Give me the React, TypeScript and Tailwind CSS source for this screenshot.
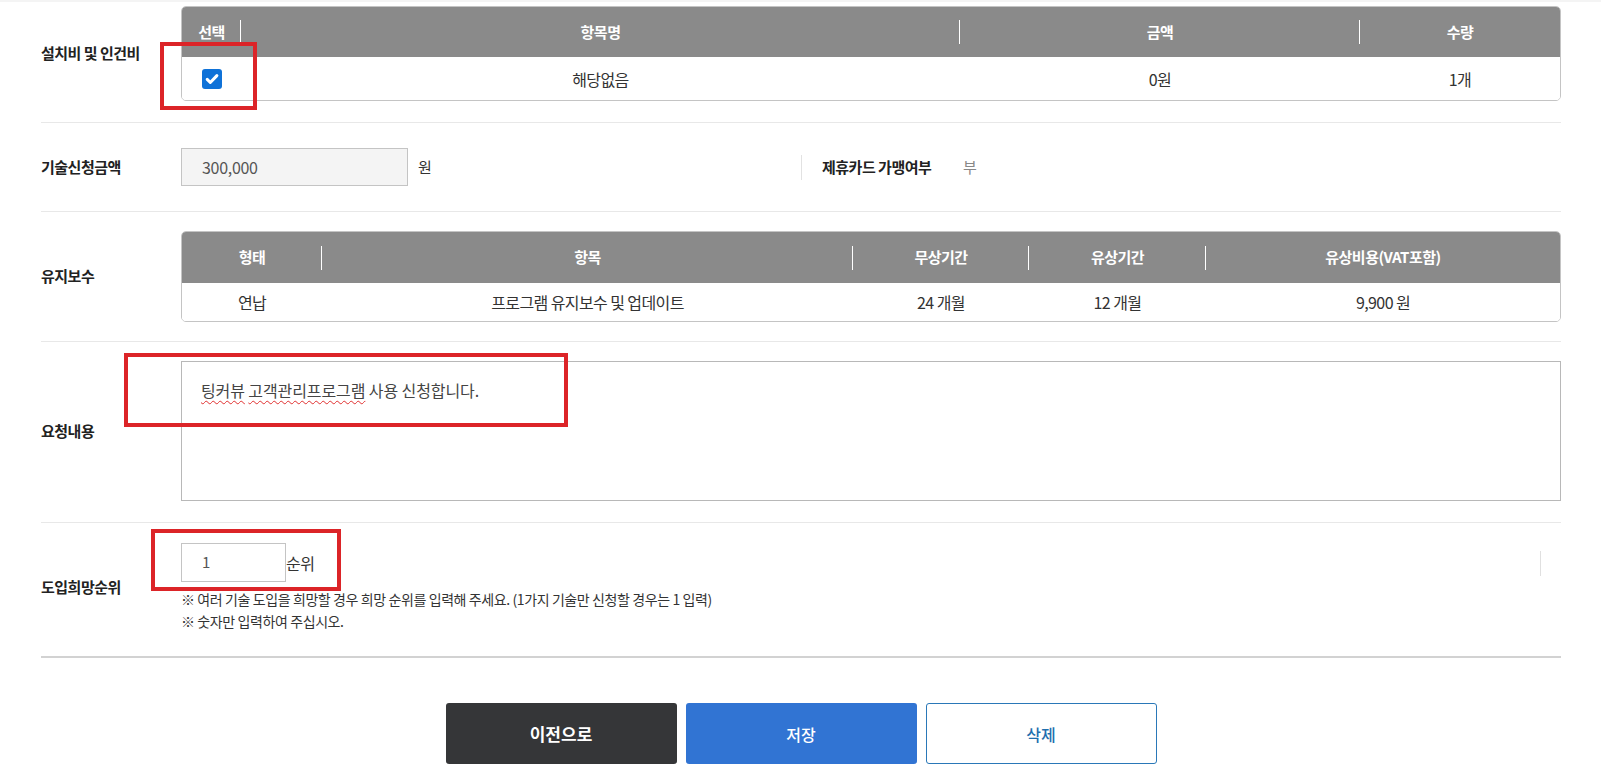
import React from "react";

const font = "font-['Noto_Sans_CJK_KR','Noto_Sans',sans-serif]";

function HeadCell({ label, divider = true }: { label: string; divider?: boolean }) {
  return (
    <div className="relative flex items-center justify-center text-[15px] font-bold tracking-[-0.5px] text-white">
      {label}
      {divider && <span className="absolute right-0 top-1/2 h-[24px] w-px -translate-y-1/2 bg-white" />}
    </div>
  );
}

function BodyCell({ children }: { children: React.ReactNode }) {
  return (
    <div className="flex items-center justify-center text-[16px] tracking-[-0.6px] text-[#333]">{children}</div>
  );
}

function CheckedBox() {
  return (
    <span className="flex h-[20px] w-[20px] items-center justify-center rounded-[3px] bg-[#0f72d8]">
      <svg viewBox="0 0 16 16" className="h-[16px] w-[16px]" fill="none">
        <path d="M3.2 8.4l3.1 3.1L12.9 4.6" stroke="white" strokeWidth="3" strokeLinecap="round" strokeLinejoin="round" />
      </svg>
    </span>
  );
}

function Row({ label, children, className }: { label: string; children: React.ReactNode; className: string }) {
  return (
    <div className={`flex items-center border-b border-[#e8e8e8] ${className}`}>
      <div className="w-[140px] shrink-0 text-[15px] font-bold tracking-[-0.5px] text-[#222]">{label}</div>
      <div className="flex-1">{children}</div>
    </div>
  );
}

export default function App() {
  return (
    <div className={`relative min-h-screen w-full bg-white ${font}`}>
      <div className="h-[2px] w-full bg-[#f4f4f4]" />
      <div className="pl-[41px] pr-[40px]">
        {/* 설치비 및 인건비 */}
        <Row label="설치비 및 인건비" className="pt-[4px] pb-[21px]">
          <div className="overflow-hidden rounded-[5px] border border-[#c4c4c4]">
            <div className="grid h-[50px] grid-cols-[59px_719px_400px_1fr] bg-[#8a8a8a]">
              <HeadCell label="선택" />
              <HeadCell label="항목명" />
              <HeadCell label="금액" />
              <HeadCell label="수량" divider={false} />
            </div>
            <div className="grid h-[43px] grid-cols-[59px_719px_400px_1fr] bg-white">
              <BodyCell>
                <CheckedBox />
              </BodyCell>
              <BodyCell>해당없음</BodyCell>
              <BodyCell>0원</BodyCell>
              <BodyCell>1개</BodyCell>
            </div>
          </div>
        </Row>

        {/* 기술신청금액 / 제휴카드 */}
        <div className="grid grid-cols-2 items-center border-b border-[#e8e8e8] py-[25px]">
          <div className="flex items-center">
            <div className="w-[140px] shrink-0 text-[15px] font-bold tracking-[-0.5px] text-[#222]">기술신청금액</div>
            <div className="flex h-[38px] w-[227px] items-center border border-[#c4c4c4] bg-[#f4f4f4] px-[20px] text-[16px] tracking-[-0.3px] text-[#555]">
              300,000
            </div>
            <span className="ml-[10px] text-[15px] text-[#333]">원</span>
          </div>
          <div className="flex h-[25px] items-center border-l border-[#e2e2e2] pl-[20px]">
            <div className="w-[141px] shrink-0 text-[15px] font-bold tracking-[-0.5px] text-[#222]">제휴카드 가맹여부</div>
            <span className="text-[15px] text-[#888]">부</span>
          </div>
        </div>

        {/* 유지보수 */}
        <Row label="유지보수" className="py-[19px]">
          <div className="overflow-hidden rounded-[5px] border border-[#c4c4c4]">
            <div className="grid h-[51px] grid-cols-[140px_531px_176px_177px_1fr] bg-[#8a8a8a]">
              <HeadCell label="형태" />
              <HeadCell label="항목" />
              <HeadCell label="무상기간" />
              <HeadCell label="유상기간" />
              <HeadCell label="유상비용(VAT포함)" divider={false} />
            </div>
            <div className="grid h-[38px] grid-cols-[140px_531px_176px_177px_1fr] bg-white">
              <BodyCell>연납</BodyCell>
              <BodyCell>프로그램 유지보수 및 업데이트</BodyCell>
              <BodyCell>24 개월</BodyCell>
              <BodyCell>12 개월</BodyCell>
              <BodyCell>9,900 원</BodyCell>
            </div>
          </div>
        </Row>

        {/* 요청내용 */}
        <Row label="요청내용" className="pt-[19px] pb-[21px]">
          <div className="h-[140px] border border-[#b8b8b8] bg-white px-[19px] pt-[16px] text-[16px] tracking-[-0.1px] text-[#444]">
            <span className="underline decoration-[#e03030] decoration-wavy decoration-1 underline-offset-[3px]">팅커뷰</span>{" "}
            <span className="underline decoration-[#e03030] decoration-wavy decoration-1 underline-offset-[3px]">고객관리프로그램</span> 사용
            신청합니다.
          </div>
        </Row>

        {/* 도입희망순위 */}
        <div className="flex items-center border-b-2 border-[#d2d2d2] pt-[20px] pb-[24px]">
          <div className="w-[140px] shrink-0 text-[15px] font-bold tracking-[-0.5px] text-[#222]">도입희망순위</div>
          <div className="flex flex-1 justify-between">
            <div>
              <div className="flex items-center">
                <div className="flex h-[39px] w-[105px] items-center border border-[#c4c4c4] bg-white pl-[20px] text-[15px] text-[#555]">
                  1
                </div>
                <span className="text-[16px] tracking-[-0.4px] text-[#333]">순위</span>
              </div>
              <div className="mt-[6px] text-[14px] leading-[22px] tracking-[-0.4px] text-[#333]">
                <p>※ 여러 기술 도입을 희망할 경우 희망 순위를 입력해 주세요. (1가지 기술만 신청할 경우는 1 입력)</p>
                <p>※ 숫자만 입력하여 주십시오.</p>
              </div>
            </div>
            <span className="mr-[20px] mt-[8px] h-[25px] w-px self-start bg-[#e0e0e0]" />
          </div>
        </div>

        {/* 버튼 */}
        <div className="mt-[45px] flex justify-center gap-[9px]">
          <button className="h-[61px] w-[231px] rounded-[3px] bg-[#353638] text-[17px] font-bold text-white">이전으로</button>
          <button className="h-[61px] w-[231px] rounded-[3px] bg-[#3174d3] text-[16px] font-medium text-white">저장</button>
          <button className="h-[61px] w-[231px] rounded-[3px] border border-[#2a78b8] bg-white text-[16px] font-medium text-[#1f6fae]">
            삭제
          </button>
        </div>
      </div>

      {/* 빨간 표시 상자 */}
      <div className="pointer-events-none absolute left-[160px] top-[42px] h-[68px] w-[97px] border-[4px] border-[#dc2428]" />
      <div className="pointer-events-none absolute left-[124px] top-[353px] h-[74px] w-[444px] border-[4px] border-[#dc2428]" />
      <div className="pointer-events-none absolute left-[151px] top-[529px] h-[62px] w-[190px] border-[4px] border-[#dc2428]" />
    </div>
  );
}
